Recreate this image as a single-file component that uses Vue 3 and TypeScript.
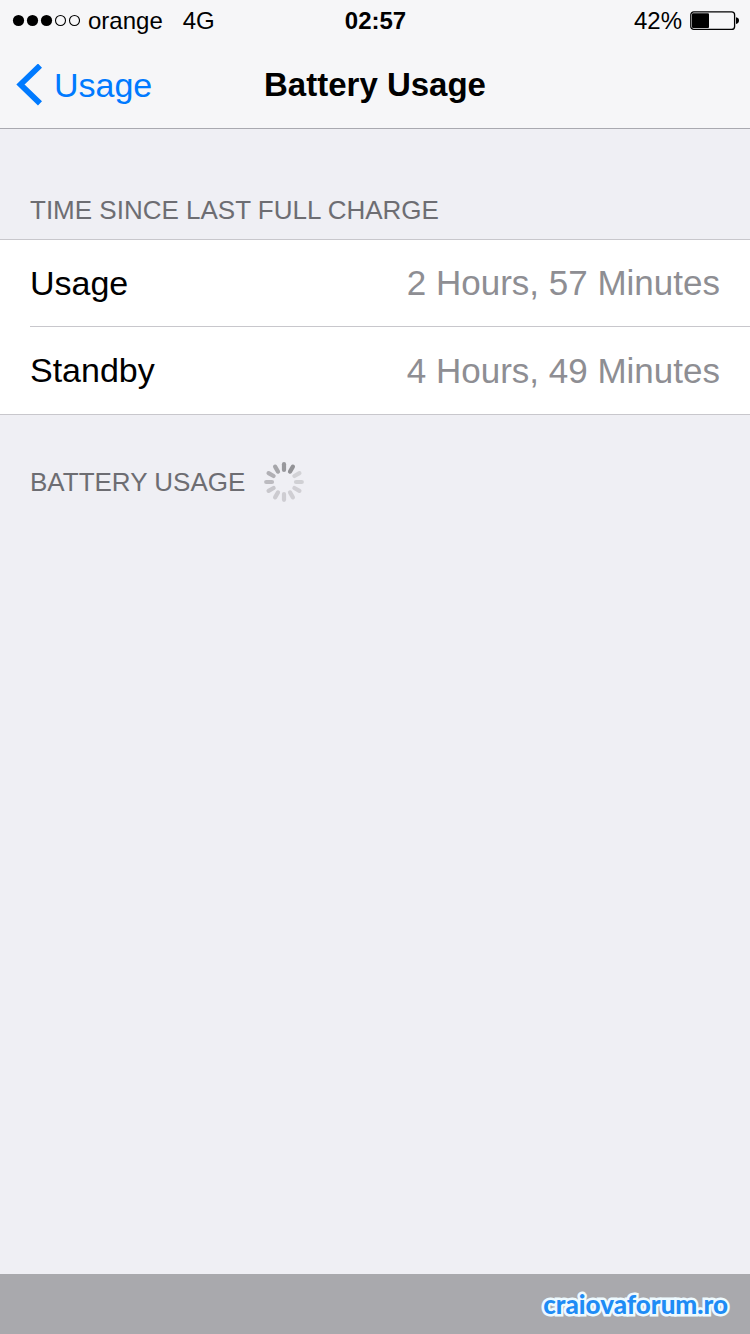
<script setup lang="ts">
interface Row {
  label: string
  value: string
}

const rows: Row[] = [
  { label: 'Usage', value: '2 Hours, 57 Minutes' },
  { label: 'Standby', value: '4 Hours, 49 Minutes' },
]

const signal: boolean[] = [true, true, true, false, false]

// Spoke greys, clockwise from the top.
const spokes: string[] = [
  '#98989c', '#929296', '#d2d2d6', '#d0d0d4', '#d0cfd4', '#cfced3',
  '#cecdd2', '#cccbd0', '#c8c7cc', '#bcbbc0', '#b0afb4', '#a6a6aa',
]
</script>

<template>
  <div class="screen">
    <header class="top">
      <div class="status">
        <div class="carrier">
          <svg class="signal" width="68" height="14" viewBox="0 0 68 14" aria-hidden="true">
            <circle
              v-for="(on, i) in signal"
              :key="i"
              :cx="6.5 + i * 14"
              cy="6.5"
              :r="on ? 5.6 : 5"
              :fill="on ? '#000' : 'none'"
              :stroke="on ? 'none' : '#000'"
              stroke-width="1.1"
            />
          </svg>
          <span>orange</span>
          <span class="network">4G</span>
        </div>
        <time class="clock">02:57</time>
        <div class="power">
          <span>42%</span>
          <svg width="49" height="20" viewBox="0 0 49 20" aria-hidden="true">
            <rect x="0.8" y="0.8" width="43.8" height="17.6" rx="3" fill="none" stroke="#000" stroke-width="1.3" />
            <rect x="2" y="2.3" width="17" height="14.7" rx="1" fill="#000" />
            <path d="M46 6.3q3 .5 3 3.3t-3 3.3z" fill="#000" />
          </svg>
        </div>
      </div>
      <nav class="nav">
        <a class="back" href="#">
          <svg width="26" height="42" viewBox="0 0 26 42" aria-hidden="true">
            <path d="M24 1.6 4.5 20.5 24 39.4" fill="none" stroke="#007aff" stroke-width="5.8" />
          </svg>
          <span>Usage</span>
        </a>
        <h1>Battery Usage</h1>
      </nav>
    </header>

    <main>
      <section>
        <h2 class="heading first">TIME SINCE LAST FULL CHARGE</h2>
        <dl class="group">
          <div v-for="row in rows" :key="row.label" class="row">
            <dt>{{ row.label }}</dt>
            <dd>{{ row.value }}</dd>
          </div>
        </dl>
      </section>
      <section class="loading">
        <h2 class="heading">BATTERY USAGE</h2>
        <svg width="40" height="40" viewBox="-20 -20 40 40" role="img" aria-label="Loading">
          <line
            v-for="(color, i) in spokes"
            :key="i"
            x1="0"
            y1="-17.8"
            x2="0"
            y2="-12"
            :stroke="color"
            stroke-width="4.2"
            stroke-linecap="round"
            :transform="`rotate(${i * 30})`"
          />
        </svg>
      </section>
    </main>

    <footer class="footer">
      <span class="brand">craiovaforum.ro</span>
    </footer>
  </div>
</template>

<style>
body {
  margin: 0;
  background: #efeff4;
}
</style>

<style scoped>
.screen {
  display: flex;
  flex-direction: column;
  min-height: 100vh;
  background: #efeff4;
  color: #000;
  font-family: "Liberation Sans", Arial, sans-serif;
}

.top {
  background: #f6f6f8;
  border-bottom: 1px solid #a9a9b0;
}

.status {
  display: grid;
  grid-template-columns: 1fr auto 1fr;
  align-items: center;
  height: 42px;
  padding: 0 11px 0 12px;
  font-size: 24px;
  line-height: 42px;
}

.carrier,
.power {
  display: flex;
  align-items: center;
}

.signal {
  margin-right: 8px;
}

.network {
  margin-left: 20px;
}

.clock {
  font-weight: bold;
}

.power {
  justify-content: flex-end;
  gap: 8px;
}

.nav {
  display: grid;
  grid-template-columns: 1fr auto 1fr;
  align-items: center;
  height: 86px;
  padding: 0 16px;
  font-size: 34px;
  line-height: 40px;
}

.back {
  display: flex;
  align-items: center;
  gap: 12px;
  color: #007aff;
  text-decoration: none;
}

h1 {
  margin: 0;
  font-size: 33px;
  font-weight: bold;
}

.heading {
  margin: 0;
  padding-left: 30px;
  font-size: 26px;
  font-weight: normal;
  line-height: 30px;
  color: #6d6d72;
}

.first {
  padding-top: 66px;
  padding-bottom: 14px;
}

.group {
  margin: 0;
  background: #fff;
  border-top: 1px solid #c8c7cc;
  border-bottom: 1px solid #c8c7cc;
}

.row {
  box-sizing: border-box;
  display: flex;
  align-items: center;
  justify-content: space-between;
  height: 87px;
  margin-left: 30px;
  padding-right: 30px;
  border-bottom: 1px solid #c8c7cc;
  font-size: 34px;
}

.row:last-child {
  border-bottom: 0;
}

dd {
  margin: 0;
  font-size: 35px;
  color: #8e8e93;
}

.loading {
  display: flex;
  align-items: center;
  gap: 19px;
  padding-top: 47px;
}

.footer {
  display: flex;
  align-items: center;
  justify-content: flex-end;
  height: 60px;
  margin-top: auto;
  padding-right: 22px;
  background: #a9a9ad;
}

.brand {
  font-family: Lato, "Open Sans", sans-serif;
  font-size: 26px;
  font-weight: 900;
  line-height: 30px;
  color: #1e8cf5;
  -webkit-text-stroke: 5px #eefaff;
  paint-order: stroke fill;
  stroke-linejoin: round;
}
</style>
